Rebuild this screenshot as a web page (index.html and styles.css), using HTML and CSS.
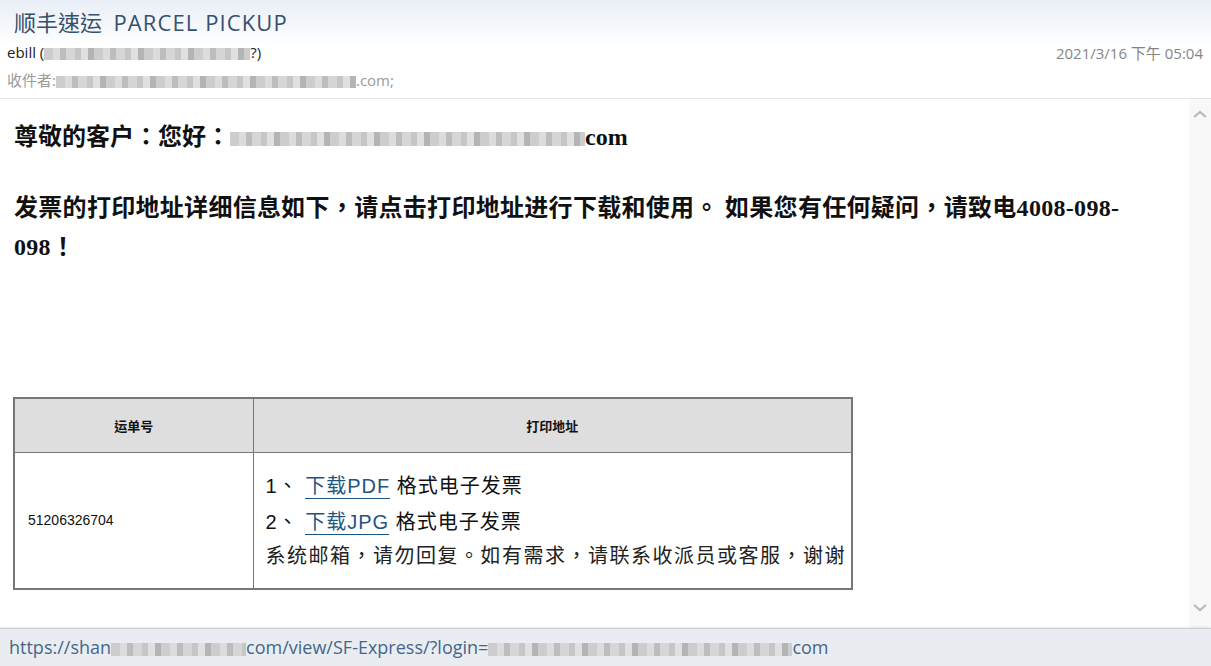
FILE: index.html
```html
<!DOCTYPE html>
<html lang="zh-TW">
<head>
  <meta charset="UTF-8" />
  <title>顺丰速运 PARCEL PICKUP</title>
  <link rel="stylesheet" href="styles.css">
</head>
<body>

  <div class="header">
    <div class="subject">顺丰速运&nbsp; <span class="latin">PARCEL PICKUP</span></div>
    <div class="meta">
      <div class="from">ebill (<span class="blur blur-from"></span>?)</div>
      <div class="date">2021/3/16 下午 05:04</div>
    </div>
    <div class="to">收件者:<span class="blur blur-to"></span>.com;</div>
  </div>

  <div class="main">
    <div class="content">
      <p class="greet">尊敬的客户：您好：<span class="blur blur-mail"></span>com</p>
      <p class="intro">发票的打印地址详细信息如下，请点击打印地址进行下载和使用。 如果您有任何疑问，请致电4008-098-098！</p>

      <table class="bill">
        <tr>
          <th class="col-no">运单号</th>
          <th>打印地址</th>
        </tr>
        <tr>
          <td class="waybill">51206326704</td>
          <td class="links">
            <div class="line">1、 <a href="#">下载PDF</a> 格式电子发票</div>
            <div class="line">2、 <a href="#">下载JPG</a> 格式电子发票</div>
            <div class="line note">系统邮箱，请勿回复。如有需求，请联系收派员或客服，谢谢</div>
          </td>
        </tr>
      </table>
    </div>

    <div class="scrollbar">
      <svg class="arrow" width="14" height="8" viewBox="0 0 14 8"><path d="M1 7 L7 2 L13 7" fill="none" stroke="#b9b9b9" stroke-width="2.2"/></svg>
      <svg class="arrow" width="14" height="8" viewBox="0 0 14 8"><path d="M1 1 L7 6 L13 1" fill="none" stroke="#b9b9b9" stroke-width="2.2"/></svg>
    </div>
  </div>

  <div class="status">https://shan<span class="blur blur-host"></span>com/view/SF-Express/?login=<span class="blur blur-login"></span>com</div>

</body>
</html>
```

FILE: styles.css
```css
* {
  box-sizing: border-box;
  margin: 0;
  padding: 0;
}

body {
  width: 1211px;
  height: 666px;
  overflow: hidden;
  display: flex;
  flex-direction: column;
  background: #fff;
  font-family: "Open Sans", "Noto Sans CJK TC", sans-serif;
}

/* pixelated bits standing in for hidden addresses */
.blur {
  display: inline-block;
  height: 12px;
  vertical-align: middle;
  background:
    repeating-linear-gradient(90deg, #cdcdcd 0 9px, #dcdcdc 9px 16px, #bdbdbd 16px 22px, #d6d6d6 22px 31px, #c6c6c6 31px 37px, #e0e0e0 37px 44px, #b4b4b4 44px 50px);
}

.header {
  height: 99px;
  padding: 7px 8px 0 7px;
  background: linear-gradient(to bottom, #e9eff7 0, #f7f9fc 30px, #fff 45px);
  border-bottom: 1px solid #e4e4e4;
}

.subject {
  padding-left: 7px;
  font-size: 22px;
  line-height: 31px;
  color: #34506f;
}

.latin {
  letter-spacing: 1.1px;
}

.meta {
  display: flex;
  justify-content: space-between;
  align-items: center;
  height: 28px;
}

.from {
  font-size: 15px;
  color: #222;
}

.blur-from { width: 206px; }

.date {
  font-size: 15px;
  color: #858585;
}

.to {
  font-size: 15px;
  line-height: 28px;
  color: #9a9a9a;
}

.blur-to { width: 300px; }

.main {
  flex: 1;
  display: flex;
}

.content {
  flex: 1;
  padding: 19px 34px 0 14px;
}

.greet, .intro {
  font-family: "Liberation Serif", "Noto Sans CJK TC", serif;
  font-weight: bold;
  font-size: 24px;
  line-height: 39px;
  color: #111;
}

.blur-mail {
  width: 355px;
  height: 14px;
  vertical-align: -1px;
}

.intro {
  margin-top: 32px;
  letter-spacing: 0.3px;
}

.bill {
  margin: 130px 0 0 -1px;
  width: 840px;
  table-layout: fixed;
  border-collapse: collapse;
  border: 2px solid #777;
}

.bill th, .bill td {
  border: 1px solid #777;
}

.bill th {
  height: 54px;
  background: #dedede;
  font-family: "Noto Sans CJK TC", sans-serif;
  font-size: 13px;
  font-weight: bold;
  color: #111;
}

.col-no {
  width: 239px;
}

.bill td {
  height: 137px;
  vertical-align: middle;
}

.waybill {
  padding-left: 13px;
  font-family: "Liberation Sans", sans-serif;
  font-size: 14px;
  color: #111;
}

.links {
  padding: 0 0 0 12px;
  font-family: "Liberation Sans", "Noto Sans CJK TC", sans-serif;
  font-size: 20px;
  color: #111;
}

.line {
  line-height: 36px;
  letter-spacing: 1px;
  white-space: nowrap;
}

.line a {
  color: #1f5481;
  text-decoration: none;
  border-bottom: 1px solid #1f5481;
  padding-bottom: 1px;
}

.note {
  line-height: 32px;
  letter-spacing: 1.5px;
  color: #222;
}

.scrollbar {
  width: 22px;
  background: #f8f8f8;
  display: flex;
  flex-direction: column;
  justify-content: space-between;
  align-items: center;
  padding: 11px 0 16px;
}

.status {
  height: 38px;
  border-top: 1px solid #c9ced4;
  box-shadow: 0 -1px 2px rgba(0, 0, 0, 0.08);
  background: #e9edf2;
  padding-left: 9px;
  font-size: 18px;
  line-height: 36px;
  color: #45668a;
  white-space: nowrap;
}

.blur-host { width: 135px; height: 13px; }
.blur-login { width: 304px; height: 13px; }
```
